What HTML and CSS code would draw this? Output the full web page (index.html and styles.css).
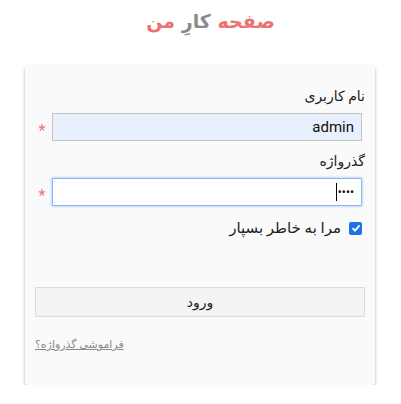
FILE: index.html
```html
<!DOCTYPE html>
<html lang="fa" dir="rtl">
<head>
<meta charset="utf-8">
<link rel="stylesheet" href="styles.css">
</head>
<body>
<h1 class="title"><span class="red">صفحه</span> <span class="gray">کارِ</span> <span class="red">من</span></h1>
<form class="card">
  <label class="lbl">نام کاربری</label>
  <div class="row">
    <input class="inp filled" type="text" value="admin" dir="ltr">
    <span class="star">*</span>
  </div>
  <label class="lbl">گذرواژه</label>
  <div class="row">
    <div class="inp focus" dir="ltr"><span class="caret"></span><span class="dots">••••</span></div>
    <span class="star">*</span>
  </div>
  <label class="check"><span class="box"><svg width="12" height="12" viewBox="0 0 12 12"><path d="M2.5 6.2 L5 8.6 L9.6 3.4" fill="none" stroke="#fff" stroke-width="1.8"/></svg></span><span>مرا به خاطر بسپار</span></label>
  <button class="btn" type="button">ورود</button>
  <a class="forgot" href="#">فراموشی گذرواژه؟</a>
</form>
</body>
</html>
```
FILE: styles.css
```css
html, body { margin: 0; padding: 0; background: #fff; }
body { font-family: Roboto, "DejaVu Sans", sans-serif; color: #222; }
.title { margin: 0; padding: 8px 0 0 20px; height: 58px; box-sizing: border-box; text-align: center; font-size: 19px; font-weight: bold; line-height: 26px; font-family: "DejaVu Sans", sans-serif; }
.red { color: #ec7171; }
.gray { color: #8a8a8a; }
.card { width: 350px; height: 319px; margin: 8px 26px 0 25px; background: #fafafa; border-radius: 3px; box-shadow: 0 1px 3px rgba(0,0,0,.35); padding: 20px 10px 0; box-sizing: border-box; display: flex; flex-direction: column; }
.lbl { font-size: 14px; line-height: 20px; height: 20px; margin-bottom: 7px; color: #222; }
.row { display: flex; align-items: center; gap: 0; margin-right: 3px; margin-bottom: 10px; }
.inp { width: 310px; height: 28px; box-sizing: border-box; border: 1px solid #c4c4c4; font-family: Roboto, sans-serif; font-size: 15px; padding: 0 7px; margin: 0; outline: none; }
.filled { background: #e8f0fe; color: #111; text-align: right; }
.focus { background: #fff; border-color: #8ab4f8; box-shadow: 0 0 3px rgba(100,160,240,.6); display: flex; align-items: center; justify-content: flex-end; }
.caret { width: 1px; height: 18px; background: #000; margin-right: 1px; }
.dots { font-size: 12px; letter-spacing: 0; color: #111; }
.star { color: #f07575; font-size: 16px; margin-right: 3px; width: 14px; padding-top: 6px; text-align: center; }
.check { display: flex; align-items: center; gap: 8px; font-size: 15px; height: 20px; margin-top: 2px; margin-right: 3px; }
.box { width: 13px; height: 13px; background: #1a73e8; border-radius: 2px; display: flex; align-items: center; justify-content: center; }
.btn { margin-top: 49px; height: 30px; width: 330px; background: #f3f3f3; border: 1px solid #dcdcdc; font-family: "DejaVu Sans", sans-serif; font-size: 14px; color: #222; padding: 0; }
.forgot { align-self: flex-end; margin-top: 20px; font-size: 11px; color: #8a8a8a; text-decoration: underline; line-height: 16px; }
```
